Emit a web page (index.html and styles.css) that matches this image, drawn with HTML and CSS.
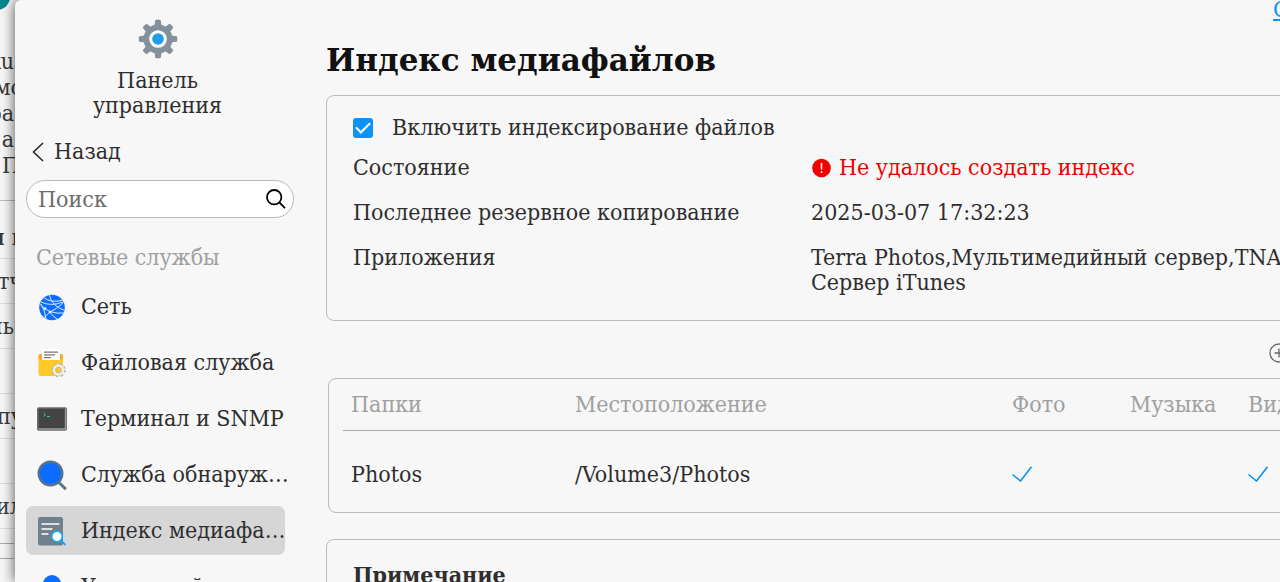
FILE: index.html
```html
<!DOCTYPE html>
<html lang="ru">
<head>
  <meta charset="UTF-8">
  <meta name="viewport" content="width=device-width, initial-scale=1.0">
  <title>Индекс медиафайлов</title>
  <link rel="stylesheet" href="styles.css">
</head>
<body>

<!-- Page behind the window -->
<aside class="backdrop">
  <span class="avatar"></span>
  <div class="backdrop-text">
    <span>ku</span>
    <span class="wide">мо</span>
    <span>ра</span>
    <span>а</span>
    <span class="mid">П</span>
  </div>
  <div class="backdrop-list">
    <span class="mid strong">и п</span>
    <span class="wide">тч</span>
    <span>нь</span>
    <span></span>
    <span class="wide">пу</span>
    <span></span>
    <span class="wide">ил</span>
    <span class="thin"></span>
    <span class="thin"></span>
  </div>
</aside>

<div class="window">

  <!-- Sidebar -->
  <nav class="sidebar">
    <div class="brand">
      <svg width="40" height="40" viewBox="0 0 40 40">
        <g fill="#84919d">
          <circle cx="20" cy="20" r="14.5"/>
          <g id="teeth">
            <path d="M16.5 7 17.2 1.5Q17.4 .8 18.2 .8H21.8Q22.6 .8 22.8 1.5L23.5 7V33L22.8 38.5Q22.6 39.2 21.8 39.2H18.2Q17.4 39.2 17.2 38.5L16.5 33z"/>
          </g>
          <use href="#teeth" transform="rotate(45 20 20)"/>
          <use href="#teeth" transform="rotate(90 20 20)"/>
          <use href="#teeth" transform="rotate(135 20 20)"/>
        </g>
        <circle cx="20" cy="20" r="8.8" fill="#fff"/>
        <circle cx="20" cy="20" r="5.8" fill="#1f9de8"/>
      </svg>
      <span>Панель<br>управления</span>
    </div>

    <button class="back" type="button">
      <svg width="12" height="20" viewBox="0 0 12 20" fill="none" stroke="#222" stroke-width="1.5"><path d="M11 1 1.5 10 11 19"/></svg>
      Назад
    </button>

    <div class="search">
      <input type="text" placeholder="Поиск" aria-label="Поиск">
      <svg width="20" height="20" viewBox="0 0 20 20" fill="none" stroke="#000" stroke-width="1.8"><circle cx="8.2" cy="8.2" r="7.2"/><path d="M13.3 13.3 19 19.2"/></svg>
    </div>

    <h2>Сетевые службы</h2>
    <ul class="menu">
      <li><a href="#">
        <svg width="30" height="30" viewBox="0 0 30 30">
          <circle cx="15" cy="15.5" r="12.8" fill="#0d6efd"/>
          <g fill="none" stroke="#d5e8ff" stroke-width="1" stroke-linecap="round">
            <path d="M7 6Q14 11 25 8.500M4 10Q14 15 26 10M3.500 13Q7 17 13 19.500Q20 22 27 21M12.500 3.500Q15 14 26.500 18M26 11Q20 17 13 20Q10 23 7.500 25M4 12Q8 18 9 27M13 20Q15 24 20 27"/>
          </g>
          <g fill="#fff"><circle cx="8" cy="16.500" r="1.300"/><circle cx="13" cy="20" r="1.300"/></g>
        </svg>
        <span>Сеть</span></a></li>
      <li><a href="#">
        <svg width="30" height="30" viewBox="0 0 30 30">
          <path d="M1.500 8Q1.500 6 3.500 6H24Q26 6 26 8V12H1.500z" fill="#f9a72b"/>
          <path d="M5 1H23V14H5z" fill="#fff"/>
          <path d="M7 4.200H21M7 6.900H18M7 9.600H14" stroke="#777" stroke-width="1.200"/>
          <path d="M1.500 9.500Q2.500 12 5 12H22Q25 12 26 9.500V26Q26 28 24 28H3.500Q1.500 28 1.500 26z" fill="#ffca28"/>
          <circle cx="21.500" cy="22" r="6" fill="none" stroke="#bbb" stroke-width="2.600" stroke-dasharray="2.400 2.310"/>
          <circle cx="21.500" cy="22" r="4.300" fill="#ffca28" stroke="#eee" stroke-width="2.800"/>
          <circle cx="21.500" cy="22" r="2.900" fill="none" stroke="#aaa" stroke-width=".6"/>
        </svg>
        <span>Файловая служба</span></a></li>
      <li><a href="#">
        <svg width="30" height="30" viewBox="0 0 30 30">
          <rect x=".8" y="4" width="28.400" height="22" rx="1" fill="#444" stroke="#6c6c6c" stroke-width="1.600"/>
          <path d="M1.500 25H28.500V5" fill="none" stroke="#999" stroke-width="1.400"/>
          <path d="M6.500 9 8.500 10.700 6.500 12.400M10 12.500H13" fill="none" stroke="#29c5c5" stroke-width="1"/>
        </svg>
        <span>Терминал и SNMP</span></a></li>
      <li><a href="#">
        <svg width="30" height="30" viewBox="0 0 30 30">
          <path d="M21.500 22 28 28.300" stroke="#5a7892" stroke-width="3" stroke-linecap="round"/>
          <circle cx="13.500" cy="13.500" r="11.800" fill="#0b6cff" stroke="#56738e" stroke-width="2.400"/>
        </svg>
        <span>Служба обнаружения</span></a></li>
      <li><a href="#" class="active">
        <svg width="30" height="30" viewBox="0 0 30 30">
          <rect x="1" y="1" width="25" height="28.500" rx="2" fill="#71808a"/>
          <path d="M5 8H22M5 13H15M5 18H11" stroke="#fff" stroke-width="1.400" stroke-linecap="round"/>
          <path d="M24 24.500 28.500 29" stroke="#12aaf5" stroke-width="1.800"/>
          <circle cx="20" cy="20.500" r="5.300" fill="#fff" stroke="#12aaf5" stroke-width="1.700"/>
        </svg>
        <span>Индекс медиафайлов</span></a></li>
      <li><a href="#">
        <svg width="30" height="30" viewBox="0 0 30 30">
          <circle cx="15" cy="12" r="9" fill="#0b6cff"/>
          <path d="M3 29Q5 19 15 19T27 29z" fill="#0b6cff"/>
        </svg>
        <span>Удаленный доступ</span></a></li>
    </ul>
  </nav>

  <!-- Content -->
  <main class="content">
    <a class="help" href="#">О</a>
    <h1>Индекс медиафайлов</h1>

    <section class="card">
      <label class="check">
        <input type="checkbox" checked>
        Включить индексирование файлов
      </label>
      <dl class="info">
        <dt>Состояние</dt>
        <dd class="error">
          <svg width="20" height="20" viewBox="0 0 20 20"><circle cx="10.500" cy="10" r="9.300" fill="#f00000"/><path d="M10.500 5V11.500M10.500 13.300V15" stroke="#fff" stroke-width="1.500"/></svg>
          Не удалось создать индекс
        </dd>
        <dt>Последнее резервное копирование</dt>
        <dd>2025-03-07 17:32:23</dd>
        <dt>Приложения</dt>
        <dd>Terra Photos,Мультимедийный сервер,TNAS<br>Сервер iTunes</dd>
      </dl>
    </section>

    <div class="toolbar">
      <button type="button" aria-label="Добавить">
        <svg width="20" height="20" viewBox="0 0 20 20" fill="none" stroke="#666" stroke-width="1.300"><circle cx="10" cy="10" r="9"/><path d="M5.500 10H14.500M10 5.500V14.500"/></svg>
      </button>
    </div>

    <div class="card folders">
      <table>
        <thead>
          <tr><th class="col-name">Папки</th><th>Местоположение</th><th class="col-type">Фото</th><th class="col-type">Музыка</th><th class="col-last">Видео</th></tr>
        </thead>
        <tbody>
          <tr>
            <td>Photos</td>
            <td>/Volume3/Photos</td>
            <td><svg width="20" height="16" viewBox="0 0 20 16" fill="none" stroke="#0d93f5" stroke-width="1.600"><path d="M.5 8.500 8.500 15 19.500 .8"/></svg></td>
            <td></td>
            <td><svg width="20" height="16" viewBox="0 0 20 16" fill="none" stroke="#0d93f5" stroke-width="1.600"><path d="M.5 8.500 8.500 15 19.500 .8"/></svg></td>
          </tr>
        </tbody>
      </table>
    </div>

    <section class="card note">
      <h3>Примечание</h3>
    </section>
  </main>
</div>

</body>
</html>
```
FILE: styles.css
```css
* { box-sizing: border-box; }
body {
  margin: 0;
  height: 100vh;
  display: flex;
  overflow: hidden;
  background: #f7f7f7;
  color: #2e2e2e;
  font: 23px/25px "DejaVu Serif Condensed", "DejaVu Serif", serif;
}
h1, h2, h3, dl, dd, ul { margin: 0; padding: 0; }
svg { flex: none; display: block; }
button { font: inherit; color: inherit; background: none; border: none; padding: 0; cursor: pointer; }

/* page behind */
.backdrop { flex: none; width: 15px; overflow: hidden; color: #3a3a3a; }
.avatar { display: block; width: 26px; height: 26px; margin: -16px 0 0 -16px; border-radius: 50%; background: #00868f; }
.backdrop-text { padding-top: 38px; line-height: 26px; }
.backdrop-text span { display: flex; justify-content: flex-end; width: 14px; }
.backdrop-list { margin-top: 22px; border-top: 1px solid #bbb; padding-top: 13px; }
.backdrop-list span { display: flex; justify-content: flex-end; width: 14px; height: 45px; line-height: 45px; white-space: nowrap; border-bottom: 1px solid #ddd; }
.backdrop .mid { width: 20px; }
.backdrop .wide { width: 23px; }
.backdrop-list .strong { width: 27px; font-weight: bold; }
.backdrop .thin { height: 15px; border-color: #aaa; }

/* window, runs past the right edge */
.window { flex: none; width: calc(100% + 60px); display: flex; background: #f7f7f7; border-top-left-radius: 6px; box-shadow: 0 0 14px rgba(0, 0, 0, 0.7); }

.sidebar { flex: none; width: 285px; padding: 19px 6px 0 11px; }
.brand { display: flex; flex-direction: column; align-items: center; gap: 9px; text-align: center; padding-right: 5px; }
.back { display: flex; align-items: center; gap: 10px; margin: 21px 0 0 6px; }
.search { display: flex; align-items: center; height: 38px; margin-top: 16px; padding: 0 7px 0 11px; border: 1px solid #bbb; border-radius: 19px; background: #fff; }
.search input { flex: 1; min-width: 0; padding: 0; border: none; outline: none; background: none; font: inherit; }
.search input::placeholder { color: #6c6c6c; }
.sidebar h2 { margin: 27px 0 12px 10px; font-size: 23px; font-weight: normal; color: #a0a0a0; }

.menu { list-style: none; display: grid; gap: 7px; }
.menu a { display: flex; align-items: center; gap: 14px; width: 259px; height: 49px; padding-left: 11px; border-radius: 7px; color: inherit; text-decoration: none; }
.menu span { flex: 1; min-width: 0; margin-right: -4px; white-space: nowrap; overflow: hidden; text-overflow: ellipsis; }
.menu .active { background: #d6d6d6; }

.content { flex: 1; min-width: 0; padding: 0 11px 0 26px; }
.help { display: block; height: 20px; line-height: 18px; margin-right: 54px; text-align: right; color: #0d93f5; }
h1 { margin: 21px 0 16px; font: bold 31px/38px "DejaVu Serif", serif; color: #111; }
.card { border: 1px solid #bbb; border-radius: 8px; }
.check { display: flex; align-items: center; gap: 19px; margin: 19px 26px 0; }
.check input {
  appearance: none;
  width: 20px;
  height: 20px;
  margin: 0;
  border-radius: 3px;
  background: #0d93f5;
}
.check input:checked::before { content: ""; display: block; width: 14px; height: 8px; margin: 4px 0 0 3px; border: solid #fff; border-width: 0 0 2px 2px; box-sizing: border-box; transform: rotate(-45deg); }
.info { display: grid; grid-template-columns: 458px 1fr; row-gap: 20px; padding: 15px 0 25px 26px; }
.info dd { white-space: nowrap; }
.error { display: flex; align-items: center; gap: 8px; color: #f00000; }

.toolbar { display: flex; justify-content: flex-end; margin: 22px 55px 15px; }
.folders { margin-left: 2px; padding: 0 14px; }
table { width: 100%; border-collapse: collapse; table-layout: fixed; }
th, td { padding: 0 8px; text-align: left; font-weight: normal; }
th { height: 51px; color: #a0a0a0; border-bottom: 1px solid #aaa; }
td { height: 82px; padding-top: 6px; }
.col-name { width: 224px; }
.col-type { width: 118px; }
.col-last { width: 89px; }
.note { margin-top: 26px; padding: 22px 26px; }
.note h3 { font-size: 23px; }
```
